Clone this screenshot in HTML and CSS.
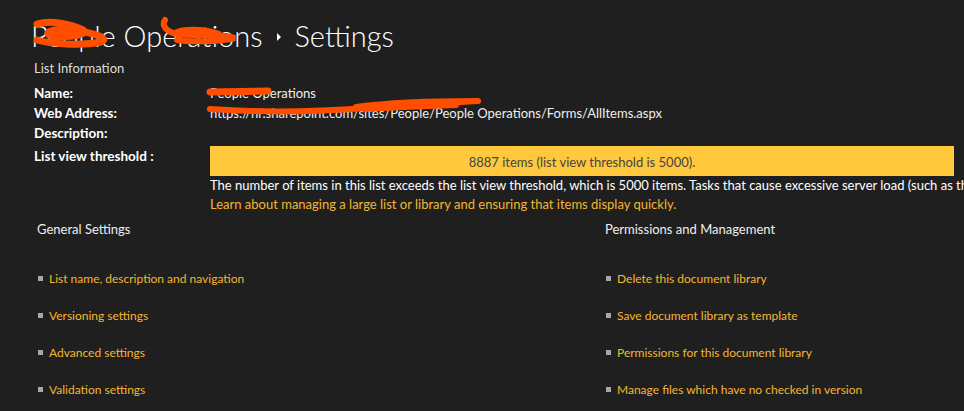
FILE: index.html
```html
<!DOCTYPE html>
<html lang="en">
<head>
    <meta charset="UTF-8">
    <meta name="viewport" content="width=device-width, initial-scale=1.0">
    <title>Settings</title>
    <link rel="stylesheet" href="styles.css">
</head>
<body>
    <div class="page">
        <h1 class="title">
            <span class="crumb">People Operations</span>
            <svg class="sep" width="6" height="10" viewBox="0 0 6 10"><path d="M1 1 L5 5 L1 9 Z" fill="#fff"/></svg>
            <span>Settings</span>
            <!-- redaction marks -->
            <svg class="scribble scribble-title" width="220" height="40" viewBox="0 0 220 40">
                <path d="M6 8 C20 4 40 8 52 14 C58 18 40 22 22 20 C10 18 20 12 40 14 C60 16 80 22 70 26 C50 30 20 28 6 24" stroke="#ff4e00" stroke-width="7" fill="none" stroke-linecap="round"/>
                <path d="M134 4 C130 10 136 16 146 18 C168 20 188 18 204 22 C188 26 158 26 146 24" stroke="#ff4e00" stroke-width="6" fill="none" stroke-linecap="round"/>
                <path d="M146 16 C158 12 178 14 188 18" stroke="#ff4e00" stroke-width="6" fill="none" stroke-linecap="round"/>
            </svg>
        </h1>

        <div class="info-head">List Information</div>

        <div class="info">
            <div class="label">Name:</div>
            <div class="value">
                People Operations
                <svg class="scribble scribble-name" width="80" height="10" viewBox="0 0 80 10"><path d="M4 5 L62 4" stroke="#ff4e00" stroke-width="7" stroke-linecap="round"/></svg>
            </div>

            <div class="label">Web Address:</div>
            <div class="value">
                https://hr.sharepoint.com/sites/People/People Operations/Forms/AllItems.aspx
                <svg class="scribble scribble-url" width="290" height="18" viewBox="0 0 290 18"><path d="M4 12 C60 16 120 14 160 11 C200 9 240 6 272 4 M150 10 C180 6 230 4 270 4 M160 12 C190 10 220 9 250 8" stroke="#ff4e00" stroke-width="6" fill="none" stroke-linecap="round"/></svg>
            </div>

            <div class="label">Description:</div>
            <div class="value"></div>

            <div class="label label-top">List view threshold :</div>
            <div class="value">
                <div class="threshold">8887 items (list view threshold is 5000).</div>
                <p class="note">The number of items in this list exceeds the list view threshold, which is 5000 items. Tasks that cause excessive server load (such as those involving all list items) are currently prohibited.</p>
                <a class="link" href="#">Learn about managing a large list or library and ensuring that items display quickly.</a>
            </div>
        </div>

        <div class="settings">
            <div class="group">
                <h3>General Settings</h3>
                <ul>
                    <li><a href="#">List name, description and navigation</a></li>
                    <li><a href="#">Versioning settings</a></li>
                    <li><a href="#">Advanced settings</a></li>
                    <li><a href="#">Validation settings</a></li>
                </ul>
            </div>
            <div class="group group-right">
                <h3>Permissions and Management</h3>
                <ul>
                    <li><a href="#">Delete this document library</a></li>
                    <li><a href="#">Save document library as template</a></li>
                    <li><a href="#">Permissions for this document library</a></li>
                    <li><a href="#">Manage files which have no checked in version</a></li>
                </ul>
            </div>
        </div>
    </div>
</body>
</html>
```

FILE: styles.css
```css
html, body {
    overflow: hidden;
}

body {
    margin: 0;
    background-color: #1f1f1f;
    color: #fff;
    font-family: Lato, "Noto Sans", sans-serif;
    font-size: 13px;
}

.page {
    padding: 14px 10px 0 34px;
}

.title {
    position: relative;
    margin: 0 0 0 -3px;
    font-size: 29px;
    font-weight: 300;
    line-height: 44px;
    height: 44px;
    display: flex;
    align-items: center;
    gap: 13px;
    white-space: nowrap;
}

.title .sep {
    margin-top: 2px;
}

.scribble {
    position: absolute;
    pointer-events: none;
}

.scribble-title {
    left: 0;
    top: 2px;
}

.info-head {
    color: #ddd;
    margin-top: 1px;
    line-height: 18px;
}

.info {
    display: grid;
    grid-template-columns: 176px 744px;
    margin-top: 6px;
}

.label {
    font-weight: bold;
    font-size: 13.5px;
    line-height: 20px;
}

.label-top {
    padding-top: 3px;
}

.value {
    position: relative;
    line-height: 20px;
    color: #eee;
    white-space: nowrap;
}

.scribble-name {
    left: -4px;
    top: 4px;
}

.scribble-url {
    left: -4px;
    top: -6px;
}

.threshold {
    margin-top: 3px;
    background-color: #ffc83d;
    color: #444;
    text-align: center;
    height: 30px;
    line-height: 32px;
}

.note {
    margin: 0;
    color: #fff;
    line-height: 19px;
}

.link {
    display: block;
    color: #f5b630;
    text-decoration: none;
    line-height: 19px;
}

.settings {
    display: grid;
    grid-template-columns: 568px 1fr;
    margin-top: 5px;
    margin-left: 3px;
}

.group h3 {
    margin: 0;
    font-size: 13px;
    font-weight: normal;
    color: #eee;
    line-height: 20px;
}

.group ul {
    list-style: none;
    margin: 21px 0 0;
    padding: 0;
}

.group li {
    display: flex;
    align-items: center;
    gap: 6px;
    height: 37px;
    padding-left: 1px;
    font-size: 12px;
}

.group li::before {
    content: "";
    width: 5px;
    height: 5px;
    background-color: #a8a8a8;
    flex-shrink: 0;
}

.group li a {
    color: #f5b630;
    text-decoration: none;
}
```
